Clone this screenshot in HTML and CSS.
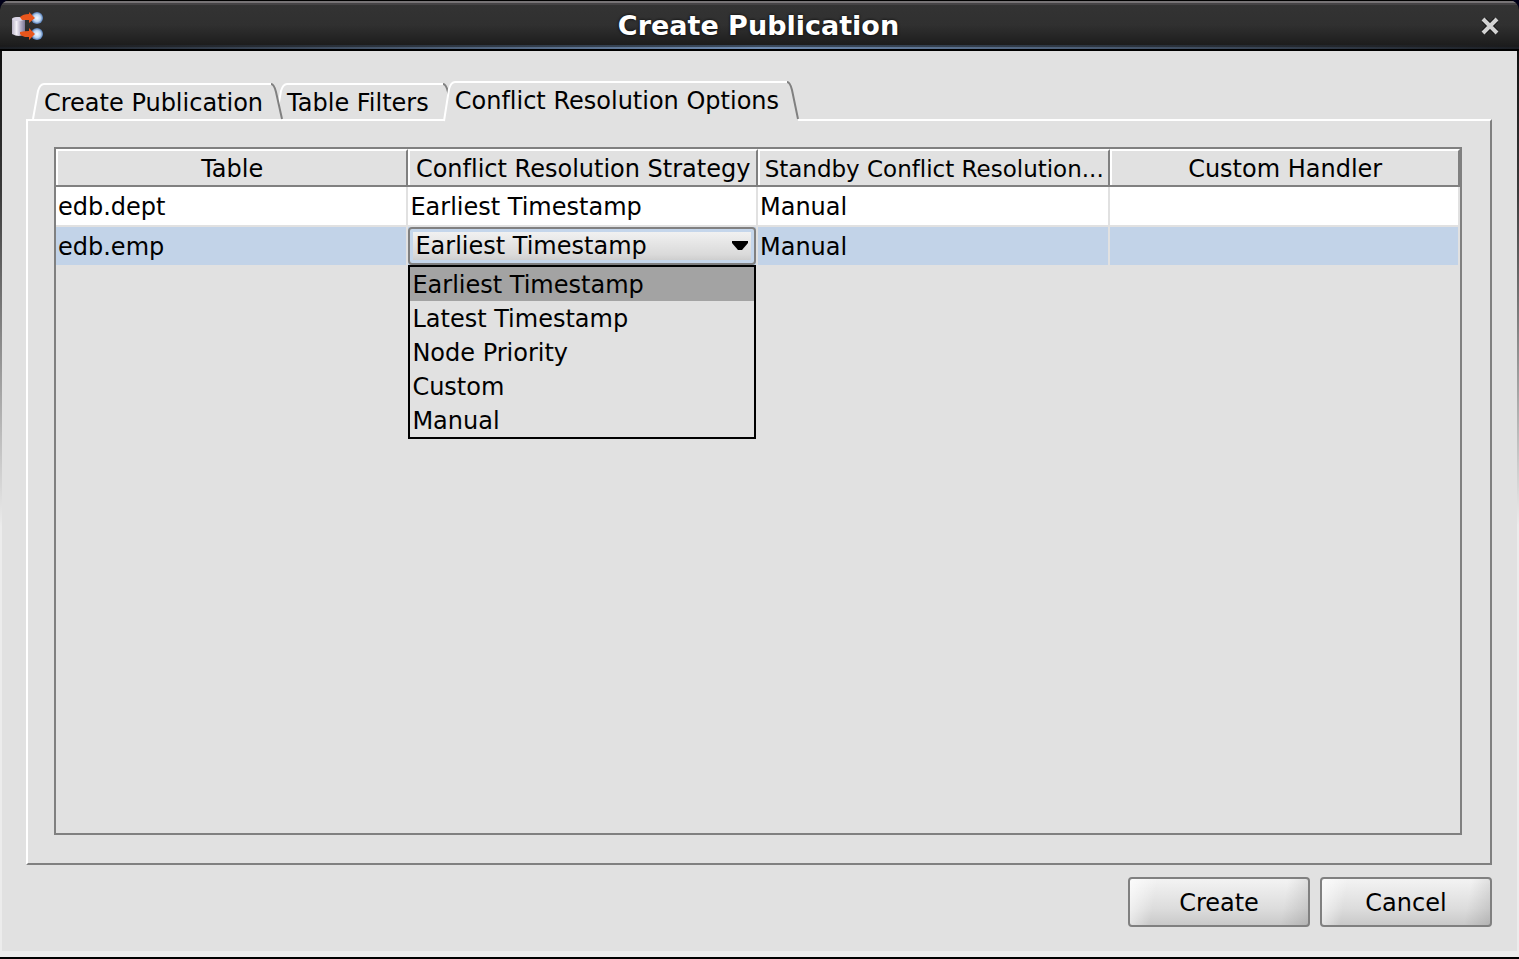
FILE: index.html
```html
<!DOCTYPE html>
<html lang="en">
<head>
<meta charset="utf-8">
<title>Create Publication</title>
<link rel="stylesheet" href="styles.css">
</head>
<body>
<div class="window">
  <header class="titlebar">
    <svg class="app-icon" viewBox="0 0 32 30" aria-hidden="true">
      <defs>
        <linearGradient id="cyl" x1="0" x2="1" y1="0" y2="0"><stop offset="0" stop-color="#b9b3c6"/><stop offset=".35" stop-color="#f4f1f8"/><stop offset=".7" stop-color="#b0a9c2"/><stop offset="1" stop-color="#7d7794"/></linearGradient>
        <radialGradient id="orb"><stop offset="0" stop-color="#f4f9ff"/><stop offset=".6" stop-color="#bcd4f0"/><stop offset="1" stop-color="#5079b4"/></radialGradient>
      </defs>
      <path d="M0 8q6-4 13 0v15q-6 4-13 0z" fill="url(#cyl)"/>
      <ellipse cx="6" cy="8" rx="6" ry="2" fill="#d9d4e4"/>
      <circle cx="25" cy="7" r="6" fill="url(#orb)"/>
      <circle cx="25" cy="23" r="6" fill="url(#orb)"/>
      <path d="M8 6q3-3 9-3V1l6 6-6 5V9h-7zM8 21q4-1 9-1v-3l6 6-6 6v-3h-4q-4-1-5-3z" fill="#e9561c"/>
    </svg>
    <h1 class="title">Create Publication</h1>
    <button class="close" type="button" aria-label="Close"><svg viewBox="0 0 18 18" aria-hidden="true"><path d="M3 3l12 12M15 3L3 15" stroke="#111" stroke-width="6"/><path d="M2 2l14 14M16 2L2 16" stroke="#d2d2d2" stroke-width="4"/></svg></button>
  </header>
  <main class="content">
    <div class="tabs" role="tablist">
      <button class="tab tab-first" type="button" role="tab" aria-selected="false">
        <svg class="edge" viewBox="0 0 12 36" preserveAspectRatio="none" aria-hidden="true"><path class="face" d="M1 36L6 8Q8 1 12 1V36z"/><path class="light" d="M1 36L6 8Q8 1 12 1"/></svg>
        <span class="tab-label">Create Publication</span>
        <svg class="edge" viewBox="0 0 12 36" preserveAspectRatio="none" aria-hidden="true"><path class="face" d="M0 1Q3 1 5 9L11 36H0z"/><path class="dark" d="M0 1Q3 1 5 9L11 36"/></svg>
      </button>
      <button class="tab tab-second" type="button" role="tab" aria-selected="false">
        <svg class="edge" viewBox="0 0 12 36" preserveAspectRatio="none" aria-hidden="true"><path class="face" d="M1 36L6 8Q8 1 12 1V36z"/><path class="light" d="M1 36L6 8Q8 1 12 1"/></svg>
        <span class="tab-label">Table Filters</span>
        <svg class="edge" viewBox="0 0 12 36" preserveAspectRatio="none" aria-hidden="true"><path class="face" d="M0 1Q3 1 5 9L11 36H0z"/><path class="dark" d="M0 1Q3 1 5 9L11 36"/></svg>
      </button>
      <button class="tab tab-active" type="button" role="tab" aria-selected="true">
        <svg class="edge" viewBox="0 0 12 40" preserveAspectRatio="none" aria-hidden="true"><path class="face" d="M1 40L6 8Q8 1 12 1V40z"/><path class="light" d="M1 40L6 8Q8 1 12 1"/></svg>
        <span class="tab-label">Conflict Resolution Options</span>
        <svg class="edge" viewBox="0 0 12 40" preserveAspectRatio="none" aria-hidden="true"><path class="face" d="M0 1Q3 1 5 9L11 40H0z"/><path class="dark" d="M0 1Q3 1 5 9L11 38"/></svg>
      </button>
    </div>
    <section class="panel" role="tabpanel">
      <div class="table-box">
        <table class="grid">
          <colgroup><col class="wide"><col class="narrow"><col class="wide"><col class="narrow"></colgroup>
          <thead>
            <tr><th scope="col">Table</th><th scope="col">Conflict Resolution Strategy</th><th scope="col" class="long">Standby Conflict Resolution...</th><th scope="col">Custom Handler</th></tr>
          </thead>
          <tbody>
            <tr><td>edb.dept</td><td>Earliest Timestamp</td><td>Manual</td><td></td></tr>
            <tr class="selected"><td>edb.emp</td>
              <td class="editing">
                <div class="combo">
                  <select class="combo-select" aria-label="Conflict Resolution Strategy">
                    <option selected>Earliest Timestamp</option><option>Latest Timestamp</option><option>Node Priority</option><option>Custom</option><option>Manual</option>
                  </select>
                  <svg class="arrow" viewBox="0 0 16 10" aria-hidden="true"><path d="M0 0h16v2l-6 7H6L0 2z"/></svg>
                  <ul class="options" role="listbox">
                    <li class="option current" role="option" aria-selected="true">Earliest Timestamp</li>
                    <li class="option" role="option">Latest Timestamp</li>
                    <li class="option" role="option">Node Priority</li>
                    <li class="option" role="option">Custom</li>
                    <li class="option" role="option">Manual</li>
                  </ul>
                </div>
              </td>
              <td>Manual</td><td></td></tr>
          </tbody>
        </table>
      </div>
    </section>
    <footer class="actions">
      <button class="button create" type="button">Create</button>
      <button class="button cancel" type="button">Cancel</button>
    </footer>
  </main>
</div>
</body>
</html>
```
FILE: styles.css
```css
* { box-sizing: border-box; }
body { margin: 0; background: #000018; color: #000; font: 24px/34px "DejaVu Sans", sans-serif; font-variant-ligatures: none; }
button, select { font: inherit; color: inherit; font-variant-ligatures: none; }
.window { display: flex; flex-direction: column; min-height: 100vh; background: linear-gradient(#000, #3a3a3a 20%, #ececec 55%); border-bottom: 2px solid #000; border-radius: 10px 10px 0 0; overflow: hidden; }
.titlebar {
  display: grid; grid-template-columns: 32px 1fr 32px; align-items: center;
  height: 51px; padding: 2px 20px 0 12px;
  border-top: 1px solid #000; border-bottom: 2px solid #000;
  background:
    linear-gradient(90deg, #1c1f24, #6f8bb0 50%, #1c1f24) bottom / 100% 2px no-repeat,
    linear-gradient(90deg, #1b1b1c, #3a4a5e 50%, #1b1b1c) 0 44px / 100% 2px no-repeat,
    linear-gradient(#777476 0 2px, #454345 2px 4px, #333 4px, #303030 50%, #191919);
}
.app-icon { width: 32px; height: 30px; }
.title { margin: 0; padding-left: 6px; text-align: center; color: #fff; font: bold 27px/44px "DejaVu Sans", sans-serif; text-shadow: 0 0 3px #000; }
.close { justify-self: end; width: 18px; height: 18px; padding: 0; border: 0; background: none; }
.close svg { display: block; width: 18px; height: 18px; }
.content { flex: 1; display: flex; flex-direction: column; margin: 0 2px 6px; padding: 30px 25px 24px 24px; background: #e1e1e1; }
.tabs { display: flex; align-items: flex-end; margin: 0 0 -2px 6px; }
.tab { position: relative; display: flex; height: 36px; margin-bottom: 2px; padding: 0; border: 0; background: none; }
.edge { display: block; flex: none; width: 12px; height: 100%; overflow: visible; }
.face { fill: #e1e1e1; }
.light, .dark { fill: none; stroke-width: 2; }
.light { stroke: #fff; }
.dark { stroke: #808080; }
.tab-label { height: 100%; padding-right: 8px; border-top: 2px solid #fff; background: #e1e1e1; line-height: 36px; text-align: left; white-space: nowrap; }
.tab-first { z-index: 2; }
.tab-second { z-index: 1; margin-left: -8px; }
.tab-second .tab-label { padding-right: 14px; }
.tab-active { z-index: 3; height: 40px; margin: 0 0 0 -12px; }
.panel { flex: 1; display: flex; padding: 26px 28px 28px 26px; border: 2px solid #808080; border-top-color: #fff; border-left-color: #fff; }
.table-box { flex: 1; min-width: 0; border: 2px solid #808080; }
.grid { width: 100%; table-layout: fixed; border-collapse: separate; border-spacing: 0; }
.wide { width: 25.1%; }
.narrow { width: 24.9%; }
.grid th { height: 38px; padding: 2px 0 0 2px; line-height: 32px; border: 2px solid #808080; border-top-color: #fff; border-left: 0; box-shadow: inset 2px 0 #fff; font-weight: normal; white-space: nowrap; }
.grid .long { font-size: 23px; }
.grid td { height: 40px; padding: 2px 0 0 2px; border-right: 2px solid #e1e1e1; border-bottom: 2px solid #e1e1e1; background: #fff; }
.grid .selected td { background: #c2d3e8; }
.grid .editing { padding: 0; }
.combo { position: relative; height: 38px; }
.combo-select { display: block; width: 100%; height: 38px; padding: 0 30px 0 5px; border: 2px solid #808080; border-radius: 4px; appearance: none; background: linear-gradient(#f4f4f4, #dadada 75%, #c8c8c8); box-shadow: inset 0 0 0 3px #c5d6eb; }
.arrow { position: absolute; right: 8px; top: 14px; width: 16px; height: 10px; pointer-events: none; }
.options { position: absolute; z-index: 5; top: 38px; left: 0; width: 100%; margin: 0; padding: 0; list-style: none; border: 2px solid #000; background: #e1e1e1; }
.option { height: 34px; padding-left: 2px; line-height: 36px; }
.current { background: #a3a3a3; }
.actions { display: flex; justify-content: flex-end; gap: 10px; padding-top: 12px; }
.button { height: 50px; padding: 2px 0 0; border: 2px solid #808080; border-radius: 4px; background: linear-gradient(100deg, #ffffffb0, #fff0 15%, #0000 85%, #0000001c), linear-gradient(#f3f3f3, #dcdcdc 65%, #c9c9c9); }
.create { width: 182px; }
.cancel { width: 172px; }
```
